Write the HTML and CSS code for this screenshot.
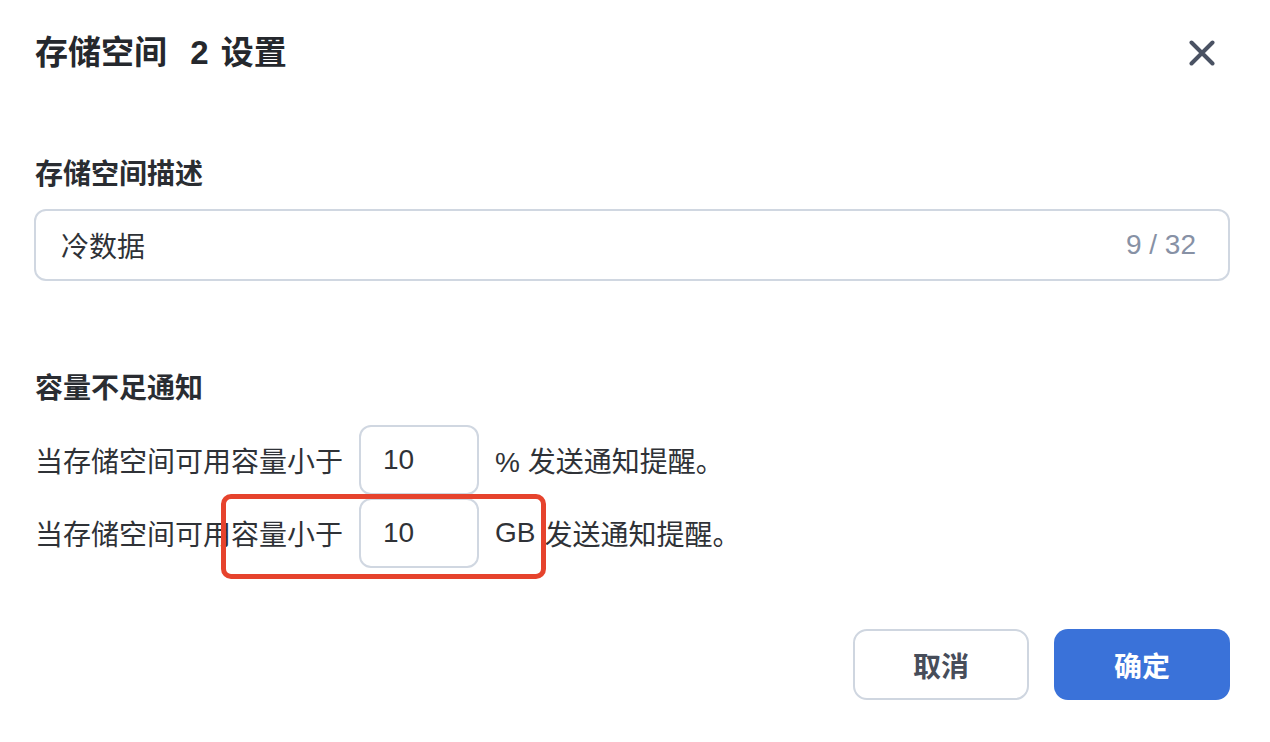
FILE: index.html
```html
<!DOCTYPE html>
<html lang="zh-CN">
<head>
<meta charset="utf-8">
<title>存储空间 2 设置</title>
<link rel="stylesheet" href="styles.css">
</head>
<body>
<div class="dialog">
  <header class="header">
    <h1 class="title">存储空间 <span class="num">2</span> 设置</h1>
    <button class="close" aria-label="关闭">
      <svg width="26" height="26" viewBox="0 0 26 26"><path d="M2.5 2.5 L23.5 23.5 M23.5 2.5 L2.5 23.5" stroke="#4a5263" stroke-width="4" stroke-linecap="round" fill="none"/></svg>
    </button>
  </header>

  <section class="section">
    <div class="label">存储空间描述</div>
    <div class="text-input">
      <span class="value">冷数据</span>
      <span class="counter">9 / 32</span>
    </div>
  </section>

  <section class="section section-notify">
    <div class="label">容量不足通知</div>
    <div class="rows">
      <div class="row">
        <span>当存储空间可用容量小于</span>
        <span class="num-input">10</span>
        <span class="unit">% 发送通知提醒。</span>
      </div>
      <div class="row">
        <span>当存储空间可用</span><span class="highlight"><span>容量小于</span><span class="num-input">10</span><span class="unit">GB</span></span><span class="tail">发送通知提醒。</span>
      </div>
    </div>
  </section>

  <footer class="footer">
    <button class="btn btn-cancel">取消</button>
    <button class="btn btn-ok">确定</button>
  </footer>
</div>
</body>
</html>
```

FILE: styles.css
```css
* { box-sizing: border-box; }

html, body {
  margin: 0;
  background: #ffffff;
}

body {
  font-family: "Liberation Sans", "Noto Sans CJK SC", sans-serif;
  color: #2f3237;
}

.dialog {
  width: 1270px;
  height: 742px;
  padding: 0 40px 0 34px;
}

.header {
  height: 106px;
  display: flex;
  align-items: center;
  justify-content: space-between;
}

.title {
  margin: 0;
  font-size: 33px;
  font-weight: 700;
  line-height: 48px;
  color: #25282d;
  padding-left: 1px;
}

.title .num {
  padding: 0 3px 0 14px;
}

.close {
  border: none;
  background: none;
  padding: 0;
  width: 26px;
  height: 26px;
  margin-right: 15px;
  display: flex;
}

.section {
  margin-top: 49px;
}

.label {
  font-size: 28px;
  font-weight: 700;
  line-height: 40px;
  color: #2a2d32;
  padding-left: 1px;
}

.text-input {
  margin-top: 14px;
  height: 72px;
  border: 2px solid #d0d7e1;
  border-radius: 12px;
  display: flex;
  align-items: center;
  justify-content: space-between;
  padding: 0 32px 0 25px;
  font-size: 28px;
}

.value {
  color: #2f3237;
}

.counter {
  color: #8791a5;
}

.section-notify {
  margin-top: 88px;
}

.rows {
  margin-top: 16px;
  display: flex;
  flex-direction: column;
  gap: 3px;
}

.row {
  display: flex;
  align-items: center;
  height: 70px;
  font-size: 28px;
  color: #2f3237;
  padding-left: 1px;
}

.num-input {
  width: 120px;
  height: 70px;
  border: 2px solid #d0d7e1;
  border-radius: 12px;
  display: flex;
  align-items: center;
  padding-left: 22px;
  margin-left: 16px;
  margin-right: 16px;
}

.highlight {
  position: relative;
  display: flex;
  align-items: center;
}

.highlight::after {
  content: "";
  position: absolute;
  left: -10px;
  right: -10px;
  top: -4px;
  bottom: -11px;
  border: 5px solid #e6432d;
  border-radius: 10px;
  pointer-events: none;
}

.tail {
  margin-left: 9px;
}

.footer {
  margin-top: 61px;
  display: flex;
  justify-content: flex-end;
  gap: 25px;
}

.btn {
  width: 176px;
  height: 71px;
  border-radius: 14px;
  font-family: "Liberation Sans", "Noto Sans CJK SC", sans-serif;
  font-size: 28px;
  font-weight: 700;
  padding: 0;
}

.btn-cancel {
  background: #ffffff;
  border: 2px solid #cfd6e0;
  color: #474d5a;
}

.btn-ok {
  background: #3a72d9;
  border: none;
  color: #ffffff;
}
```
